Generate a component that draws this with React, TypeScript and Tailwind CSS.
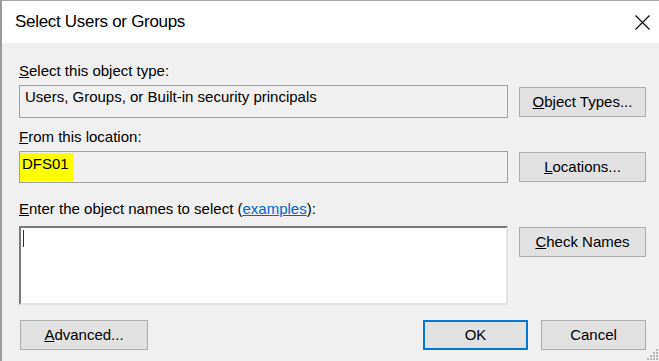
type BtnProps = {
  children: React.ReactNode;
  className?: string;
  primary?: boolean;
};

function Btn({ children, className = "", primary }: BtnProps) {
  return (
    <button
      className={`flex h-[30px] shrink-0 items-center justify-center bg-[#e1e1e1] text-[15px] leading-[18px] text-black ${
        primary ? "border-2 border-[#0078d7]" : "border border-[#adadad]"
      } ${className}`}
    >
      {children}
    </button>
  );
}

function Label({ children, className = "" }: { children: React.ReactNode; className?: string }) {
  return <div className={`h-[18px] text-[15px] leading-[18px] text-black ${className}`}>{children}</div>;
}

function Grip() {
  const dots = [
    [9, 0],
    [6, 3],
    [9, 3],
    [3, 6],
    [6, 6],
    [9, 6],
    [0, 9],
    [3, 9],
    [6, 9],
    [9, 9],
  ];
  return (
    <svg width="12" height="12" viewBox="0 0 12 12" className="absolute bottom-0 right-0">
      {dots.map(([x, y]) => (
        <rect key={`${x}-${y}`} x={x} y={y} width="2" height="2" fill="#b8b8b8" />
      ))}
    </svg>
  );
}

export default function App() {
  return (
    <div className="flex h-[361px] w-[659px] flex-col overflow-hidden border-l-2 border-t border-l-[#9b9b9b] border-t-[#a8a8a8] bg-[#f0f0f0] font-['Liberation_Sans',Arial,sans-serif]">
      {/* title bar */}
      <div className="flex h-[42px] shrink-0 items-center justify-between bg-white pl-[13px] pr-[8px]">
        <span className="text-[17px] leading-[20px] tracking-[-0.3px] text-black">Select Users or Groups</span>
        <svg width="15" height="15" viewBox="0 0 15 15" className="mr-[1px]">
          <path d="M0.5 0.5 L14.5 14.5 M14.5 0.5 L0.5 14.5" stroke="#111" strokeWidth="1.3" />
        </svg>
      </div>

      {/* body */}
      <div className="relative flex flex-1 flex-col pl-[17px] pr-[13px] pt-[19px]">
        <Label>
          <u>S</u>elect this object type:
        </Label>
        <div className="mt-[5px] flex items-center gap-[11px]">
          <div className="h-[33px] w-[489px] border border-[#a0a0a0] pl-[5px] pt-[2px] text-[15px] leading-[18px] text-black">
            Users, Groups, or Built-in security principals
          </div>
          <Btn className="w-[127px]">
            <span>
              <u>O</u>bject Types...
            </span>
          </Btn>
        </div>

        <Label className="mt-[10px]">
          <u>F</u>rom this location:
        </Label>
        <div className="mt-[5px] flex items-center gap-[11px]">
          <div className="h-[32px] w-[489px] border border-[#a0a0a0] pl-[0px]">
            <span className="inline-block h-[28px] bg-[#ffff00] pl-[2px] pr-[5px] pt-[2px] text-[15px] leading-[18px] text-black">
              DFS01
            </span>
          </div>
          <Btn className="w-[127px]">
            <span>
              <u>L</u>ocations...
            </span>
          </Btn>
        </div>

        <Label className="mt-[17px]">
          <u>E</u>nter the object names to select (
          <span className="text-[#0066cc] underline">examples</span>):
        </Label>
        <div className="mt-[8px] flex items-start gap-[11px]">
          <div className="h-[79px] w-[489px] border-2 border-b-[#e3e3e3] border-l-[#7a7a7a] border-r-[#e3e3e3] border-t-[#7a7a7a] bg-white pl-[2px] pt-[2px]">
            <div className="h-[17px] w-[1px] bg-[#333]" />
          </div>
          <Btn className="mt-[1px] h-[29px] w-[127px]">
            <span>
              <u>C</u>heck Names
            </span>
          </Btn>
        </div>

        <div className="mt-[15px] flex items-center">
          <Btn className="ml-[1px] w-[128px]">
            <span>
              <u>A</u>dvanced...
            </span>
          </Btn>
          <div className="flex-1" />
          <Btn primary className="w-[105px]">
            OK
          </Btn>
          <Btn className="ml-[13px] w-[105px]">Cancel</Btn>
        </div>

        <Grip />
      </div>
    </div>
  );
}
